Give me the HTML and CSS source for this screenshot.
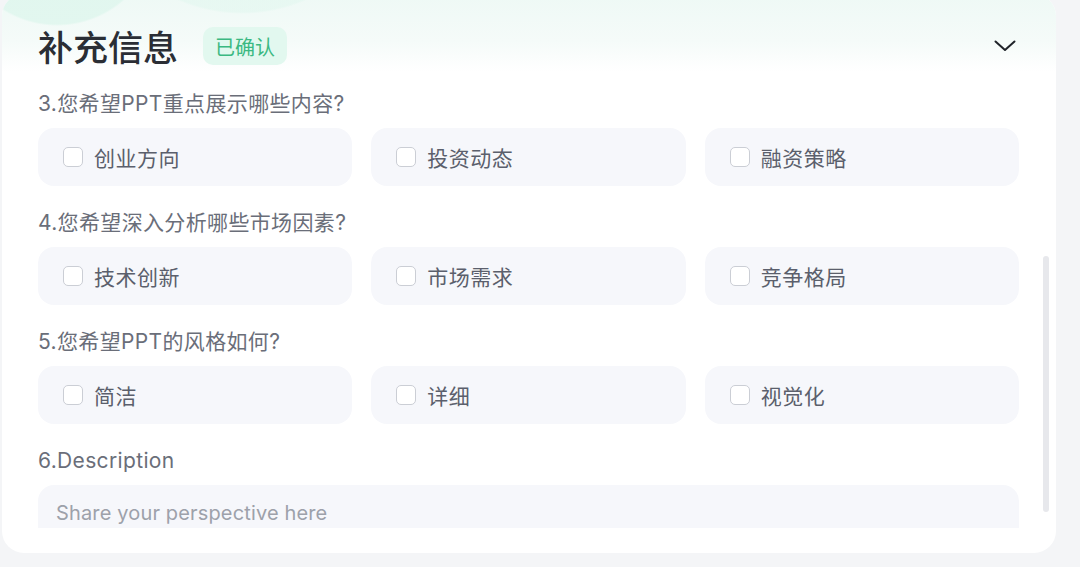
FILE: index.html
```html
<!DOCTYPE html>
<html lang="zh-CN">
<head>
<meta charset="utf-8">
<title>补充信息</title>
<link rel="stylesheet" href="styles.css">
</head>
<body>
<div class="card">
  <div class="header">
    <div class="title-wrap">
      <h2 class="title">补充信息</h2>
      <span class="badge">已确认</span>
    </div>
    <svg class="chevron" width="22" height="12" viewBox="0 0 22 12" aria-hidden="true">
      <path d="M1.5 1.5 L11 10 L20.5 1.5" fill="none" stroke="#1f2329" stroke-width="2" stroke-linecap="round" stroke-linejoin="round"/>
    </svg>
  </div>
  <div class="content">
    <div class="question">
      <div class="q-label">3.您希望PPT重点展示哪些内容?</div>
      <div class="options">
        <label class="option"><span class="check"></span><span>创业方向</span></label>
        <label class="option"><span class="check"></span><span>投资动态</span></label>
        <label class="option"><span class="check"></span><span>融资策略</span></label>
      </div>
    </div>
    <div class="question">
      <div class="q-label">4.您希望深入分析哪些市场因素?</div>
      <div class="options">
        <label class="option"><span class="check"></span><span>技术创新</span></label>
        <label class="option"><span class="check"></span><span>市场需求</span></label>
        <label class="option"><span class="check"></span><span>竞争格局</span></label>
      </div>
    </div>
    <div class="question">
      <div class="q-label">5.您希望PPT的风格如何?</div>
      <div class="options">
        <label class="option"><span class="check"></span><span>简洁</span></label>
        <label class="option"><span class="check"></span><span>详细</span></label>
        <label class="option"><span class="check"></span><span>视觉化</span></label>
      </div>
    </div>
    <div class="question">
      <div class="q-label">6.Description</div>
      <div class="textarea">Share your perspective here</div>
    </div>
  </div>
  <div class="scroll-thumb"></div>
</div>
</body>
</html>
```

FILE: styles.css
```css
* { box-sizing: border-box; }

html, body {
  margin: 0;
  padding: 0;
  height: 100%;
  overflow: hidden;
}

body {
  background: #f4f5f7;
  font-family: "Inter", "Noto Sans CJK SC", sans-serif;
  color: #2a2e36;
}

.card {
  position: relative;
  margin: -6px 0 0 2px;
  width: 1054px;
  height: 559px;
  background: #ffffff;
  border-radius: 22px;
  overflow: hidden;
  display: flex;
  flex-direction: column;
}

.header {
  height: 78px;
  flex: none;
  display: flex;
  align-items: center;
  justify-content: space-between;
  padding: 26px 40px 0 36px;
  background:
    radial-gradient(circle at 55px -70px, rgba(222, 246, 237, 0.8) 0, rgba(222, 246, 237, 0.8) 100px, rgba(222, 246, 237, 0) 102px),
    radial-gradient(circle at 240px -140px, rgba(226, 247, 239, 0.6) 0, rgba(226, 247, 239, 0.6) 158px, rgba(226, 247, 239, 0) 160px),
    linear-gradient(180deg, #eef9f5 0%, #f5fbf9 60%, #ffffff 100%);
}

.title-wrap {
  display: flex;
  align-items: center;
  gap: 25px;
}

.title {
  margin: 0;
  font-family: "Noto Sans CJK SC", sans-serif;
  font-size: 35px;
  font-weight: 500;
  color: #2a2e35;
  line-height: 44px;
}

.badge {
  display: inline-flex;
  align-items: center;
  height: 38px;
  padding: 0 12px;
  border-radius: 10px;
  background: #e2f8ef;
  color: #3bb982;
  font-family: "Noto Sans CJK SC", sans-serif;
  font-size: 20px;
}

.chevron {
  display: block;
}

.content {
  flex: 1;
  min-height: 0;
  overflow: hidden;
  padding: 18px 37px 0 36px;
  margin-bottom: 25px;
}

.question {
  margin-bottom: 23px;
}

.q-label {
  font-size: 21px;
  line-height: 28px;
  letter-spacing: 0.35px;
  color: #6a6e79;
  margin-bottom: 10px;
}

.options {
  display: grid;
  grid-template-columns: repeat(3, 1fr);
  gap: 19px;
}

.option {
  height: 58px;
  display: flex;
  align-items: center;
  gap: 11px;
  padding-left: 25px;
  background: #f6f7fb;
  border-radius: 16px;
  font-size: 21px;
  letter-spacing: 0.5px;
  color: #5b5f6c;
}

.check {
  width: 20px;
  height: 20px;
  flex: none;
  border: 1.5px solid #cbced5;
  border-radius: 5px;
  background: #ffffff;
}

.textarea {
  height: 80px;
  background: #f6f7fb;
  border-radius: 16px;
  padding: 14px 18px;
  font-size: 20px;
  line-height: 28px;
  letter-spacing: 0.15px;
  color: #9da1aa;
}

.scroll-thumb {
  position: absolute;
  left: 1041px;
  top: 262px;
  width: 6px;
  height: 256px;
  border-radius: 3px;
  background: #e7e8ec;
}
```
